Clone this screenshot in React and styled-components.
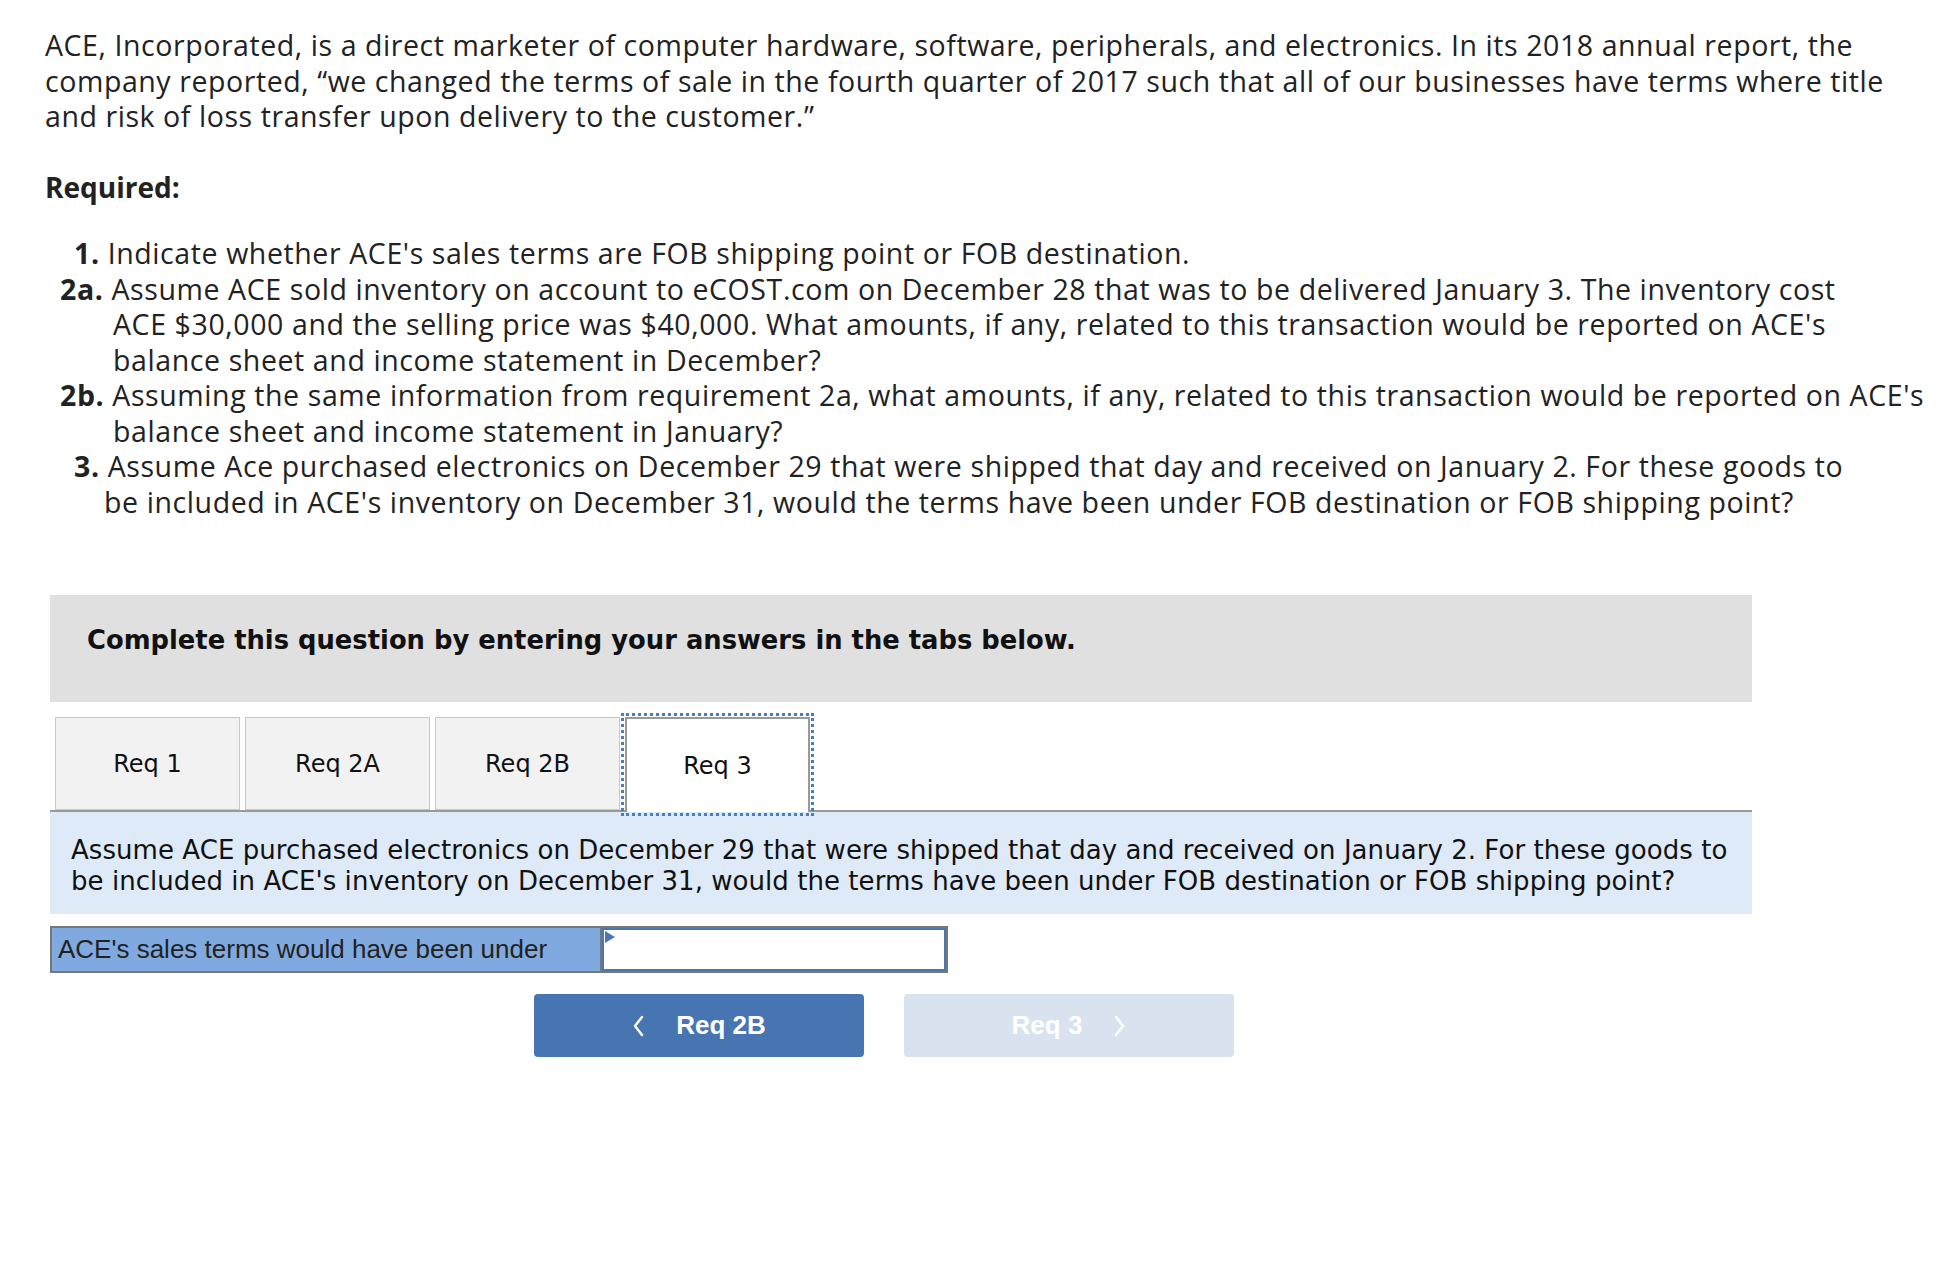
import React from "react";
import styled, { createGlobalStyle } from "styled-components";

const GlobalStyle = createGlobalStyle`
	html, body {
		margin: 0;
		padding: 0;
		background: #fff;
	}
	body {
		font-family: "Open Sans", Lato, "Liberation Sans", sans-serif;
		color: #222;
	}
`;

const Page = styled.div`
	padding: 28px 8px 120px 45px;
`;

const Intro = styled.p`
	margin: 0;
	font-size: 28.5px;
	line-height: 35.5px;
	letter-spacing: 0.57px;
	color: #222;
`;

const Required = styled.div`
	margin-top: 35px;
	font-size: 28px;
	line-height: 35.5px;
	font-weight: 700;
`;

const List = styled.div`
	margin-top: 31px;
	font-size: 28.5px;
	line-height: 35.5px;
	letter-spacing: 0.6px;
`;

const Item = styled.div`
	padding-left: ${(p) => p.$pad}px;
	text-indent: ${(p) => -p.$hang}px;

	b {
		font-weight: 700;
	}
`;

const Question = styled.div`
	margin: 75px 0 0 5px;
	width: 1702px;
	font-family: "DejaVu Sans", Verdana, sans-serif;
`;

const Banner = styled.div`
	height: 107px;
	box-sizing: border-box;
	padding: 30px 37px;
	background: #e0e0e0;
	font-size: 25.8px;
	font-weight: 700;
	color: #111;
`;

const TabRow = styled.div`
	display: flex;
	align-items: flex-end;
	gap: 5px;
	margin-top: 15px;
	padding-left: 5px;
	border-bottom: 2px solid #9a9a9a;
`;

const Tab = styled.div`
	width: 185px;
	box-sizing: border-box;
	display: flex;
	align-items: center;
	justify-content: center;
	font-size: 24px;
	color: #111;
	background: ${(p) => (p.$active ? "#fff" : "#f2f2f2")};
	border: ${(p) => (p.$active ? "2px solid #999" : "1.5px solid #c8c8c8")};
	border-bottom: ${(p) => (p.$active ? "none" : "1.5px solid #c8c8c8")};
	margin-bottom: ${(p) => (p.$active ? "-2px" : "0")};
	height: ${(p) => (p.$active ? "95px" : "93px")};
	outline: ${(p) => (p.$active ? "3px dotted #4a7cc1" : "none")};
	outline-offset: 1px;
`;

const Prompt = styled.div`
	background: #deeaf7;
	padding: 23px 8px 17px 21px;
	font-size: 26px;
	line-height: 31px;
	letter-spacing: 0.05px;
	color: #111;
`;

const AnswerRow = styled.div`
	display: flex;
	margin-top: 12px;
	font-family: "Liberation Sans", Arial, sans-serif;
`;

const Label = styled.div`
	width: 550px;
	height: 47px;
	box-sizing: border-box;
	border: 2px solid #777;
	border-right: none;
	background: #80aadf;
	padding-left: 6px;
	display: flex;
	align-items: center;
	font-size: 26px;
	color: #222;
	white-space: nowrap;
`;

const InputBox = styled.div`
	position: relative;
	width: 348px;
	height: 47px;
	box-sizing: border-box;
	border: 2px solid #777;
	background: #4a76b1;
	padding: 2px;

	&::before {
		content: "";
		position: absolute;
		left: 3px;
		top: 3px;
		border-left: 10px solid #4a76b1;
		border-top: 6.5px solid transparent;
		border-bottom: 6.5px solid transparent;
		z-index: 1;
	}
`;

const InputField = styled.div`
	width: 100%;
	height: 100%;
	background: #fff;
`;

const NavRow = styled.div`
	display: flex;
	gap: 40px;
	margin-top: 21px;
	padding-left: 484px;
	font-family: "Liberation Sans", Arial, sans-serif;
`;

const NavButton = styled.div`
	width: 330px;
	height: 63px;
	border-radius: 4px;
	display: flex;
	align-items: center;
	justify-content: center;
	gap: 30px;
	font-size: 26px;
	font-weight: 700;
	color: #fff;
	background: ${(p) => (p.$disabled ? "#d9e3ef" : "#4775b2")};

	svg {
		width: 14px;
		height: 22px;
	}
`;

const Chevron = ({ dir }) => (
	<svg viewBox="0 0 14 22" fill="none" stroke="#fff" strokeWidth="2.4" strokeLinecap="round" strokeLinejoin="round">
		{dir === "left" ? <polyline points="10,2 3,11 10,20" /> : <polyline points="4,2 11,11 4,20" />}
	</svg>
);

export default function App() {
	const tabs = ["Req 1", "Req 2A", "Req 2B", "Req 3"];

	return (
		<Page>
			<GlobalStyle />
			<Intro>
				ACE, Incorporated, is a direct marketer of computer hardware, software, peripherals, and electronics. In its
				2018 annual report, the company reported, “we changed the terms of sale in the fourth quarter of 2017 such that
				all of our businesses have terms where title and risk of loss transfer upon delivery to the customer.”
			</Intro>
			<Required>Required:</Required>
			<List>
				<Item $pad={29} $hang={0}>
					<b>1.</b> Indicate whether ACE's sales terms are FOB shipping point or FOB destination.
				</Item>
				<Item $pad={68} $hang={53}>
					<b>2a.</b> Assume ACE sold inventory on account to eCOST.com on December 28 that was to be delivered January 3.
					The inventory cost
					<br />
					ACE $30,000 and the selling price was $40,000. What amounts, if any, related to this transaction would be
					reported on ACE's balance sheet and income statement in December?
				</Item>
				<Item $pad={68} $hang={53}>
					<b>2b.</b> Assuming the same information from requirement 2a, what amounts, if any, related to this transaction
					would be reported on ACE's balance sheet and income statement in January?
				</Item>
				<Item $pad={59} $hang={30}>
					<b>3.</b> Assume Ace purchased electronics on December 29 that were shipped that day and received on January 2.
					For these goods to
					<br />
					be included in ACE's inventory on December 31, would the terms have been under FOB destination or FOB shipping
					point?
				</Item>
			</List>

			<Question>
				<Banner>Complete this question by entering your answers in the tabs below.</Banner>
				<TabRow>
					{tabs.map((t, i) => (
						<Tab key={t} $active={i === tabs.length - 1}>
							{t}
						</Tab>
					))}
				</TabRow>
				<Prompt>
					Assume ACE purchased electronics on December 29 that were shipped that day and received on January 2. For these
					goods to be included in ACE's inventory on December 31, would the terms have been under FOB destination or FOB
					shipping point?
				</Prompt>
				<AnswerRow>
					<Label>ACE's sales terms would have been under</Label>
					<InputBox>
						<InputField />
					</InputBox>
				</AnswerRow>
				<NavRow>
					<NavButton>
						<Chevron dir="left" />
						<span>Req 2B</span>
					</NavButton>
					<NavButton $disabled>
						<span>Req 3</span>
						<Chevron dir="right" />
					</NavButton>
				</NavRow>
			</Question>
		</Page>
	);
}
